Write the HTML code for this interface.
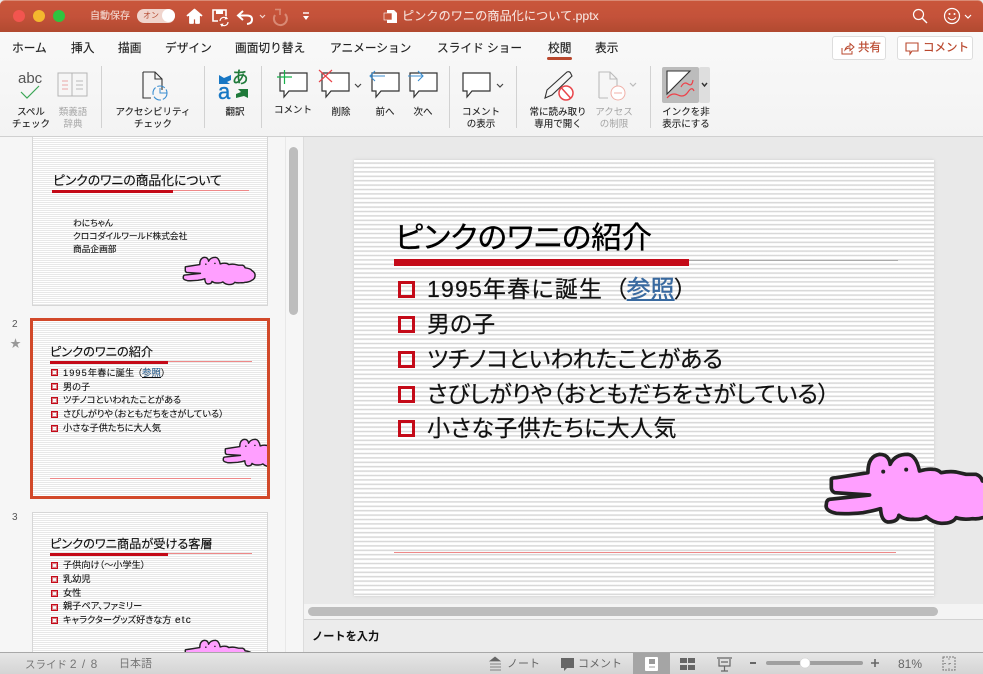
<!DOCTYPE html>
<html lang="ja"><head><meta charset="utf-8"><style>
html,body{margin:0;padding:0}
body{width:983px;height:674px;overflow:hidden;position:relative;background:#e9e9e9;font-family:"Liberation Sans","Noto Sans CJK JP",sans-serif;color:#222}
.a,.t,.c{position:absolute}
.t{white-space:nowrap;line-height:1}
.c{white-space:nowrap;line-height:12px;text-align:center;font-size:9.5px;color:#222;-webkit-text-stroke:.12px #222}
.g{color:#a5a5a5;-webkit-text-stroke:0}
.tab{position:absolute;top:42px;font-size:11.7px;line-height:14px;white-space:nowrap;color:#222;-webkit-text-stroke:.15px #222}
.sep{position:absolute;top:66px;width:1px;height:62px;background:#d2d2d2}
.stripe{background:repeating-linear-gradient(to bottom,#fff 0,#fff 1.9px,#d4d4d4 2.9px,#d4d4d4 3.2px,#fff 4.4px)}
.stripe2{background:repeating-linear-gradient(to bottom,#fff 0,#fff 1px,#e8e8e8 1px,#e8e8e8 2px)}
.bx{position:absolute;box-sizing:border-box;border:1px solid #c40a18;box-shadow:inset 0 0 0 1px rgba(196,10,24,.5);width:7px;height:7px}
.big{position:absolute;box-sizing:border-box;border:3px solid #c40a18;width:17px;height:17px;left:398px}
.m{position:absolute;left:427px;white-space:nowrap;line-height:1;font-size:23px;color:#111;font-feature-settings:"palt";-webkit-text-stroke:.2px #111}
.b{position:absolute;left:30px;white-space:nowrap;line-height:1;font-size:9.200px;color:#111;font-feature-settings:"palt";-webkit-text-stroke:.1px #111}
.h{position:absolute;white-space:nowrap;line-height:1;font-size:12.200px;color:#111;font-feature-settings:"palt";-webkit-text-stroke:.15px #111}
svg{position:absolute;overflow:visible}
</style></head><body>
<svg width="0" height="0" style="position:absolute"><defs>
<symbol id="croc" viewBox="70 65 565 225" preserveAspectRatio="none" overflow="visible">
<path d="M95 150Q95 145 110 145L205 130Q205 80 240 75Q268 75 272 105Q285 75 325 75Q350 78 360 125Q385 118 400 120Q415 120 425 130Q450 125 470 128L500 135L530 135Q545 140 549 155Q590 160 600 175Q625 190 625 210Q625 240 600 250Q575 265 549 265Q535 270 520 268Q490 272 470 265Q460 283 425 282Q400 280 380 262Q365 272 340 270Q315 272 298 258Q295 278 265 278Q245 275 243 238Q220 245 190 250Q140 255 110 252Q75 245 80 225Q80 212 90 210L210 197L105 190Q95 185 95 175Z" fill="#ff9fff" stroke="#222" stroke-width="11" stroke-linejoin="round"/>
<circle cx="251" cy="127" r="6" fill="#222"/><circle cx="320" cy="121" r="6" fill="#222"/>
</symbol>
<g id="bub"><path d="M1 1H28V19H10L5 25V19H1Z" fill="#fff" stroke="#333" stroke-width="1.2"/></g>
</defs></svg>

<!-- title bar -->
<div class="a" style="left:0;top:0;width:983px;height:32px;background:linear-gradient(#c9563b,#c4523a 50%,#b14a30);border-top:1px solid #d98a75;box-sizing:border-box;border-radius:5px 5px 0 0"></div>
<div class="a" style="left:13px;top:10px;width:12px;height:12px;border-radius:50%;background:#f2554f"></div>
<div class="a" style="left:33px;top:10px;width:12px;height:12px;border-radius:50%;background:#f4b82e"></div>
<div class="a" style="left:53px;top:10px;width:12px;height:12px;border-radius:50%;background:#2fc43f"></div>
<div class="t" style="left:90px;top:12px;font-size:10px;color:#f3d8d0;-webkit-text-stroke:.12px #f3d8d0">自動保存</div>
<div class="a" style="left:137px;top:9px;width:38px;height:14px;border-radius:7px;background:#f0d5cd"></div>
<div class="t" style="left:143px;top:12px;font-size:8px;color:#b3492f">オン</div>
<div class="a" style="left:162px;top:9px;width:13px;height:13px;border-radius:50%;background:#fff"></div>
<svg style="left:185px;top:7px" width="125" height="20" viewBox="0 0 125 20">
<path d="M2 9L9.500 2.500L17 9M5 9V16H8V11.500H11V16H14V9" fill="#fff" stroke="#fff" stroke-width="1.800" stroke-linejoin="round"/>
<path d="M33 14H28V3H41V9" fill="none" stroke="#fff" stroke-width="1.600"/><rect x="31" y="3" width="7" height="4" fill="#fff"/>
<path d="M35 14A3.800 3.800 0 0 1 41.500 11.500M43 15A3.800 3.800 0 0 1 36.500 17.500" fill="none" stroke="#fff" stroke-width="1.200"/><path d="M41 9L43 12L39.500 12.500ZM37 20L35 17L38.500 16.500Z" fill="#fff"/>
<path d="M58 4L53 8.500L58 13M54 8.500H62Q67 8.500 67 12.500T62 17" fill="none" stroke="#fff" stroke-width="2"/>
<path d="M75 8L77.500 10.500L80 8" fill="none" stroke="#f3d8d0" stroke-width="1.200"/>
<path d="M100 7A6.500 6.500 0 1 1 90 8" fill="none" stroke="#d98a75" stroke-width="2"/><path d="M90 2.500H96M95 3V8" fill="none" stroke="#d98a75" stroke-width="1.600"/>
<path d="M118 6H124" stroke="#fff" stroke-width="1.400"/><path d="M118 9H124L121 13Z" fill="#fff"/>
</svg>
<svg style="left:384px;top:9px" width="14" height="15" viewBox="0 0 14 15"><path d="M3 1H10L13 4V14H3Z" fill="#fff"/><rect x="0" y="4" width="8" height="7" fill="#c9563b" stroke="#fff" stroke-width=".6"/></svg>
<div class="t" style="left:402px;top:10px;font-size:12.200px;color:#f6e4de;-webkit-text-stroke:.1px #f6e4de">ピンクのワニの商品化について.pptx</div>
<svg style="left:912px;top:8px" width="16" height="16" viewBox="0 0 16 16"><circle cx="6.500" cy="6.500" r="5" fill="none" stroke="#fff" stroke-width="1.200"/><path d="M10 10L15 15" stroke="#fff" stroke-width="1.400"/></svg>
<svg style="left:944px;top:7px" width="30" height="18" viewBox="0 0 30 18"><circle cx="8" cy="9" r="7.500" fill="none" stroke="#fff" stroke-width="1.200"/><circle cx="5.500" cy="7" r="1" fill="#fff"/><circle cx="10.500" cy="7" r="1" fill="#fff"/><path d="M4 10.500Q8 15 12 10.500" fill="none" stroke="#fff"/><path d="M21 8L24 11L27 8" fill="none" stroke="#fff" stroke-width="1.200"/></svg>

<!-- ribbon -->
<div class="a" style="left:0;top:32px;width:983px;height:105px;background:linear-gradient(#f9f9f9,#f3f3f3);border-bottom:1px solid #d0d0d0;box-sizing:border-box"></div>
<div class="tab" style="left:12px">ホーム</div>
<div class="tab" style="left:71px">挿入</div>
<div class="tab" style="left:118px">描画</div>
<div class="tab" style="left:165px">デザイン</div>
<div class="tab" style="left:235px">画面切り替え</div>
<div class="tab" style="left:330px">アニメーション</div>
<div class="tab" style="left:437px">スライド ショー</div>
<div class="tab" style="left:548px">校閲</div>
<div class="tab" style="left:595px">表示</div>
<div class="a" style="left:547px;top:57px;width:25px;height:3px;border-radius:2px;background:#b9472d"></div>
<div class="a" style="left:832px;top:36px;width:54px;height:24px;box-sizing:border-box;background:#fff;border:1px solid #ddd;border-radius:3px"></div>
<svg style="left:841px;top:42px" width="14" height="13" viewBox="0 0 14 13"><path d="M1 6V12H11V9M4 8Q5 4 9 4V1.500L13 5L9 8.500V6Q6 6 4 8Z" fill="none" stroke="#b9472d"/></svg>
<div class="t" style="left:858px;top:43px;font-size:11.500px;color:#b9472d;-webkit-text-stroke:.2px #b9472d">共有</div>
<div class="a" style="left:897px;top:36px;width:76px;height:24px;box-sizing:border-box;background:#fff;border:1px solid #ddd;border-radius:3px"></div>
<svg style="left:905px;top:42px" width="14" height="14" viewBox="0 0 14 14"><path d="M1 1H13V9H7L5 12V9H1Z" fill="none" stroke="#b9472d" stroke-width="1.100"/></svg>
<div class="t" style="left:923px;top:43px;font-size:11.500px;color:#b9472d;-webkit-text-stroke:.2px #b9472d">コメント</div>

<div class="sep" style="left:101px"></div><div class="sep" style="left:204px"></div><div class="sep" style="left:261px"></div><div class="sep" style="left:449px"></div><div class="sep" style="left:516px"></div><div class="sep" style="left:650px"></div>

<!-- review icons -->
<div class="t" style="left:18px;top:71px;font-size:15px;color:#555">abc</div>
<svg style="left:0;top:0" width="983" height="136" viewBox="0 0 983 136">
<path d="M21 92L27 98L39 86" fill="none" stroke="#3aa655" stroke-width="1.200"/>
<path d="M58 73H72V96H58ZM72 73H87V96H72Z" fill="#f6f6f6" stroke="#b5b5b5"/><path d="M62 81H68M62 85H68M62 89H68" stroke="#e9a5a5"/><path d="M76 81H83M76 85H83M76 89H83" stroke="#bbb"/>
<path d="M143 72H155L162 79V90M155 72V79H162M143 72V98H151" fill="none" stroke="#333" stroke-width="1.100"/>
<circle cx="160" cy="93" r="7" fill="none" stroke="#3b8ed0" stroke-width="1.100" stroke-dasharray="8 2"/><path d="M160 88V93H167" fill="none" stroke="#3b8ed0"/>
<path d="M219 75L224 78L231 75V80L227 82L230 84H219Z" fill="#1777c4"/><path d="M248 89V98L244 96L236 98V94L241 92L238 89Z" fill="#1f7a3a"/>
<g transform="translate(279,72)"><use href="#bub"/></g>
<path d="M277 77H292M284.500 70V84" stroke="#17b04a" stroke-width="1.200"/>
<g transform="translate(321,72)"><use href="#bub"/></g>
<path d="M319 70L332 82M332 70L319 82" stroke="#e8454a" stroke-width="1.200"/>
<path d="M355 84L358 87L361 84" fill="none" stroke="#444" stroke-width="1.200"/>
<g transform="translate(371,72)"><use href="#bub"/></g>
<path d="M385 76H370M375 71L370 76L375 81" fill="none" stroke="#3b8ed0" stroke-width="1.100"/>
<g transform="translate(409,72)"><use href="#bub"/></g>
<path d="M408 76H423M418 71L423 76L418 81" fill="none" stroke="#3b8ed0" stroke-width="1.100"/>
<g transform="translate(462,72)"><use href="#bub"/></g>
<path d="M497 84L500 87L503 84" fill="none" stroke="#444" stroke-width="1.200"/>
<path d="M545 98L547 90L567 72Q570 71 571 74L572 76L552 95Z" fill="#f6f6f6" stroke="#333" stroke-width="1.100"/>
<circle cx="566" cy="93" r="7" fill="#fff" stroke="#e8454a" stroke-width="1.500"/><path d="M561.500 88L570.500 98" stroke="#e8454a" stroke-width="1.500"/>
<path d="M599 98V72H610L617 79V86M610 72V79H617" fill="none" stroke="#bbb" stroke-width="1.100"/><path d="M599 98H608" stroke="#bbb"/>
<circle cx="618" cy="93" r="7" fill="#fff" stroke="#f0b0a8"/><path d="M614 93H622" stroke="#f0b0a8"/>
<path d="M630 83L633 86L636 83" fill="none" stroke="#bbb" stroke-width="1.200"/>
<rect x="662" y="67" width="37" height="36" rx="2" fill="#bcbcbc"/><rect x="699" y="67" width="11" height="36" rx="2" fill="#dedede"/>
<path d="M667 94V71H690Z" fill="#fff" stroke="#333" stroke-width="1.100"/>
<path d="M681 87Q684 81 688 84T693 80M667 98Q672 92 678 95T688 92T694 91" fill="none" stroke="#ee4048" stroke-width="1.200"/>
<path d="M702 83L704.500 86L707 83" fill="none" stroke="#333" stroke-width="1.400"/>
</svg>
<div class="t" style="left:232px;top:70px;font-size:16.500px;color:#1f7a3a;-webkit-text-stroke:.4px #1f7a3a">あ</div>
<div class="t" style="left:218px;top:81px;font-size:22px;color:#1777c4;-webkit-text-stroke:.4px #1777c4">a</div>

<div class="c" style="left:6px;top:107px;width:50px">スペル<br>チェック</div>
<div class="c g" style="left:48px;top:107px;width:50px">類義語<br>辞典</div>
<div class="c" style="left:103px;top:107px;width:100px">アクセシビリティ<br>チェック</div>
<div class="c" style="left:210px;top:107px;width:50px">翻訳</div>
<div class="c" style="left:268px;top:105px;width:50px">コメント</div>
<div class="c" style="left:316px;top:107px;width:50px">削除</div>
<div class="c" style="left:360px;top:107px;width:50px">前へ</div>
<div class="c" style="left:398px;top:107px;width:50px">次へ</div>
<div class="c" style="left:456px;top:107px;width:50px">コメント<br>の表示</div>
<div class="c" style="left:524px;top:107px;width:68px">常に読み取り<br>専用で開く</div>
<div class="c g" style="left:589px;top:107px;width:50px">アクセス<br>の制限</div>
<div class="c" style="left:656px;top:107px;width:60px">インクを非<br>表示にする</div>

<!-- left panel -->
<div class="a" style="left:0;top:137px;width:304px;height:515px;background:#f6f6f6;border-right:1px solid #dcdcdc;box-sizing:border-box"></div>
<div class="a" style="left:285px;top:137px;width:1px;height:515px;background:#e8e8e8"></div>
<div class="a" style="left:289px;top:147px;width:9px;height:168px;border-radius:5px;background:#bdbdbd"></div>

<!-- thumb 1 -->
<div class="a stripe2" style="left:32px;top:137px;width:236px;height:169px;box-sizing:border-box;border:1px solid #d6d6d6;border-top:0"></div>
<div class="h" style="left:53px;top:175px;font-size:12.800px">ピンクのワニの商品化について</div>
<div class="a" style="left:52px;top:190px;width:197px;height:1px;background:#e88"></div>
<div class="a" style="left:52px;top:190px;width:121px;height:3px;background:#c40a18"></div>
<div class="b" style="left:73px;top:219px;font-size:8.700px">わにちゃん</div>
<div class="b" style="left:73px;top:232px;font-size:8.700px">クロコダイルワールド株式会社</div>
<div class="b" style="left:73px;top:245px;font-size:8.700px">商品企画部</div>
<svg style="left:182px;top:256px" width="74.400" height="29.600"><use href="#croc" width="74.400" height="29.600"/></svg>

<!-- thumb 2 -->
<div class="t" style="left:12px;top:320px;font-size:10px;color:#555">2</div>
<div class="t" style="left:10px;top:339px;font-size:11px;color:#999">★</div>
<div class="a stripe2" style="left:30px;top:318px;width:240px;height:181px;box-sizing:border-box;border:3px solid #d2492a;overflow:hidden">
<div class="h" style="left:17px;top:25px">ピンクのワニの紹介</div>
<div class="a" style="left:17px;top:40px;width:202px;height:1px;background:#e88"></div>
<div class="a" style="left:17px;top:40px;width:118px;height:3px;background:#c40a18"></div>
<div class="bx" style="left:18px;top:48px"></div><div class="b" style="top:48px"><span style="letter-spacing:1.100px">1995</span><span style="letter-spacing:.2px">年春に誕生</span><span style="margin-left:3px">（</span><span style="color:#2f6ea5;text-decoration:underline;font-size:9.500px">参照</span>）</div>
<div class="bx" style="left:18px;top:62px"></div><div class="b" style="top:62px">男の子</div>
<div class="bx" style="left:18px;top:76px"></div><div class="b" style="top:75px">ツチノコといわれたことがある</div>
<div class="bx" style="left:18px;top:90px"></div><div class="b" style="top:89px">さびしがりや（おともだちをさがしている）</div>
<div class="bx" style="left:18px;top:104px"></div><div class="b" style="top:103px">小さな子供たちに大人気</div>
<div class="a" style="left:17px;top:157px;width:201px;height:1px;background:#e88"></div>
<svg style="left:189px;top:117px" width="74.400" height="29.600"><use href="#croc" width="74.400" height="29.600"/></svg>
</div>

<!-- thumb 3 -->
<div class="t" style="left:12px;top:513px;font-size:10px;color:#555">3</div>
<div class="a stripe2" style="left:32px;top:512px;width:236px;height:140px;box-sizing:border-box;border:1px solid #d6d6d6;border-bottom:0;overflow:hidden">
<div class="h" style="left:17px;top:25px">ピンクのワニ商品が受ける客層</div>
<div class="a" style="left:17px;top:40px;width:202px;height:1px;background:#e88"></div>
<div class="a" style="left:17px;top:40px;width:118px;height:3px;background:#c40a18"></div>
<div class="bx" style="left:18px;top:49px"></div><div class="b" style="top:48px">子供向け（～小学生）</div>
<div class="bx" style="left:18px;top:63px"></div><div class="b" style="top:62px">乳幼児</div>
<div class="bx" style="left:18px;top:77px"></div><div class="b" style="top:76px">女性</div>
<div class="bx" style="left:18px;top:91px"></div><div class="b" style="top:89px">親子ペア、ファミリー</div>
<div class="bx" style="left:18px;top:104px"></div><div class="b" style="top:103px">キャラクターグッズ好きな方 <span style="font-size:10px;letter-spacing:1.200px;margin-left:1px">etc</span></div>
<svg style="left:149px;top:126px" width="74.400" height="29.600"><use href="#croc" width="74.400" height="29.600"/></svg>
</div>

<!-- main slide -->
<div class="a stripe" style="left:354px;top:160px;width:580px;height:436px;box-shadow:0 0 3px #ccc"></div>
<div class="t" style="left:395px;top:223px;font-size:30.400px;color:#000;font-feature-settings:'palt';-webkit-text-stroke:.3px #000">ピンクのワニの紹介</div>
<div class="a" style="left:394px;top:260px;width:504px;height:1px;background:#aaa"></div>
<div class="a" style="left:394px;top:259px;width:295px;height:7px;background:#c40a18"></div>
<div class="big" style="top:281px"></div>
<div class="m" style="top:278px"><span style="letter-spacing:1.200px">1995</span><span style="letter-spacing:1.200px">年春に誕生</span><span style="margin-left:12px">（</span><span style="color:#38699f;text-decoration:underline;font-size:24px;-webkit-text-stroke:.4px #38699f">参照</span>）</div>
<div class="big" style="top:316px"></div>
<div class="m" style="top:313px">男の子</div>
<div class="big" style="top:351px"></div>
<div class="m" style="top:348px">ツチノコといわれたことがある</div>
<div class="big" style="top:386px"></div>
<div class="m" style="top:383px">さびしがりや（おともだちをさがしている）</div>
<div class="big" style="top:420px"></div>
<div class="m" style="top:417px;letter-spacing:.4px">小さな子供たちに大人気</div>
<div class="a" style="left:394px;top:552px;width:502px;height:1px;background:#e88"></div>
<div class="a" style="left:820px;top:448px;width:163px;height:82px;overflow:hidden"><svg style="left:3px;top:3px" width="188" height="75"><use href="#croc" width="188" height="75"/></svg></div>

<!-- bottom scroll and notes -->
<div class="a" style="left:304px;top:604px;width:679px;height:15px;background:#f4f4f4"></div>
<div class="a" style="left:308px;top:607px;width:630px;height:9px;border-radius:5px;background:#bdbdbd"></div>
<div class="a" style="left:304px;top:619px;width:679px;height:33px;background:#ececec;border-top:1px solid #d2d2d2;box-sizing:border-box"></div>
<div class="t" style="left:312px;top:632px;font-size:11.200px;font-weight:bold;color:#111">ノートを入力</div>

<!-- status bar -->
<div class="a" style="left:0;top:652px;width:983px;height:22px;background:linear-gradient(#e6e6e6,#d4d4d4);border-top:1px solid #a8a8a8;box-sizing:border-box"></div>
<div class="t" style="left:25px;top:658px;font-size:10.500px;color:#777">スライド <span style="font-size:12px;letter-spacing:1px">2 / 8</span></div>
<div class="t" style="left:119px;top:659px;font-size:11px;color:#777">日本語</div>
<div class="a" style="left:633px;top:653px;width:37px;height:21px;background:#a5a5a5"></div>
<svg style="left:0;top:0" width="983" height="674" viewBox="0 0 983 674">
<path d="M490 661L495 657L500 661ZM490 664H501M490 667H501M490 670H501" fill="#666" stroke="#666" stroke-width=".8"/>
<path d="M561 658H574V668H567L564 671V668H561Z" fill="#666"/>
<rect x="645" y="657" width="13" height="14" rx="1" fill="#fff"/><rect x="649" y="659" width="6" height="5" fill="#999"/><path d="M649 667H655" stroke="#999"/>
<path d="M680 658H687V663H680ZM688 658H695V663H688ZM680 665H687V670H680ZM688 665H695V670H688Z" fill="#666"/>
<path d="M717 658H732M719 659V666H730V659M724.500 666V671M721 671H728M721 662H728" fill="none" stroke="#666" stroke-width="1.200"/>
<path d="M750 663H756" stroke="#666" stroke-width="2"/>
<rect x="766" y="661" width="97" height="4" rx="2" fill="#a0a0a0"/>
<circle cx="805" cy="663" r="5" fill="#fff" stroke="#ccc" stroke-width=".5"/>
<path d="M871 663H879M875 659V667" stroke="#666" stroke-width="1.600"/>
<rect x="943" y="657" width="12" height="13" fill="none" stroke="#777" stroke-dasharray="2 1"/><path d="M949 658V669M944 663.500H954" stroke="#777" stroke-width=".7" stroke-dasharray="2 3"/>
</svg>
<div class="t" style="left:507px;top:659px;font-size:11px;color:#666">ノート</div>
<div class="t" style="left:578px;top:659px;font-size:11px;color:#666">コメント</div>
<div class="t" style="left:898px;top:658px;font-size:12px;color:#666">81%</div>
</body></html>
